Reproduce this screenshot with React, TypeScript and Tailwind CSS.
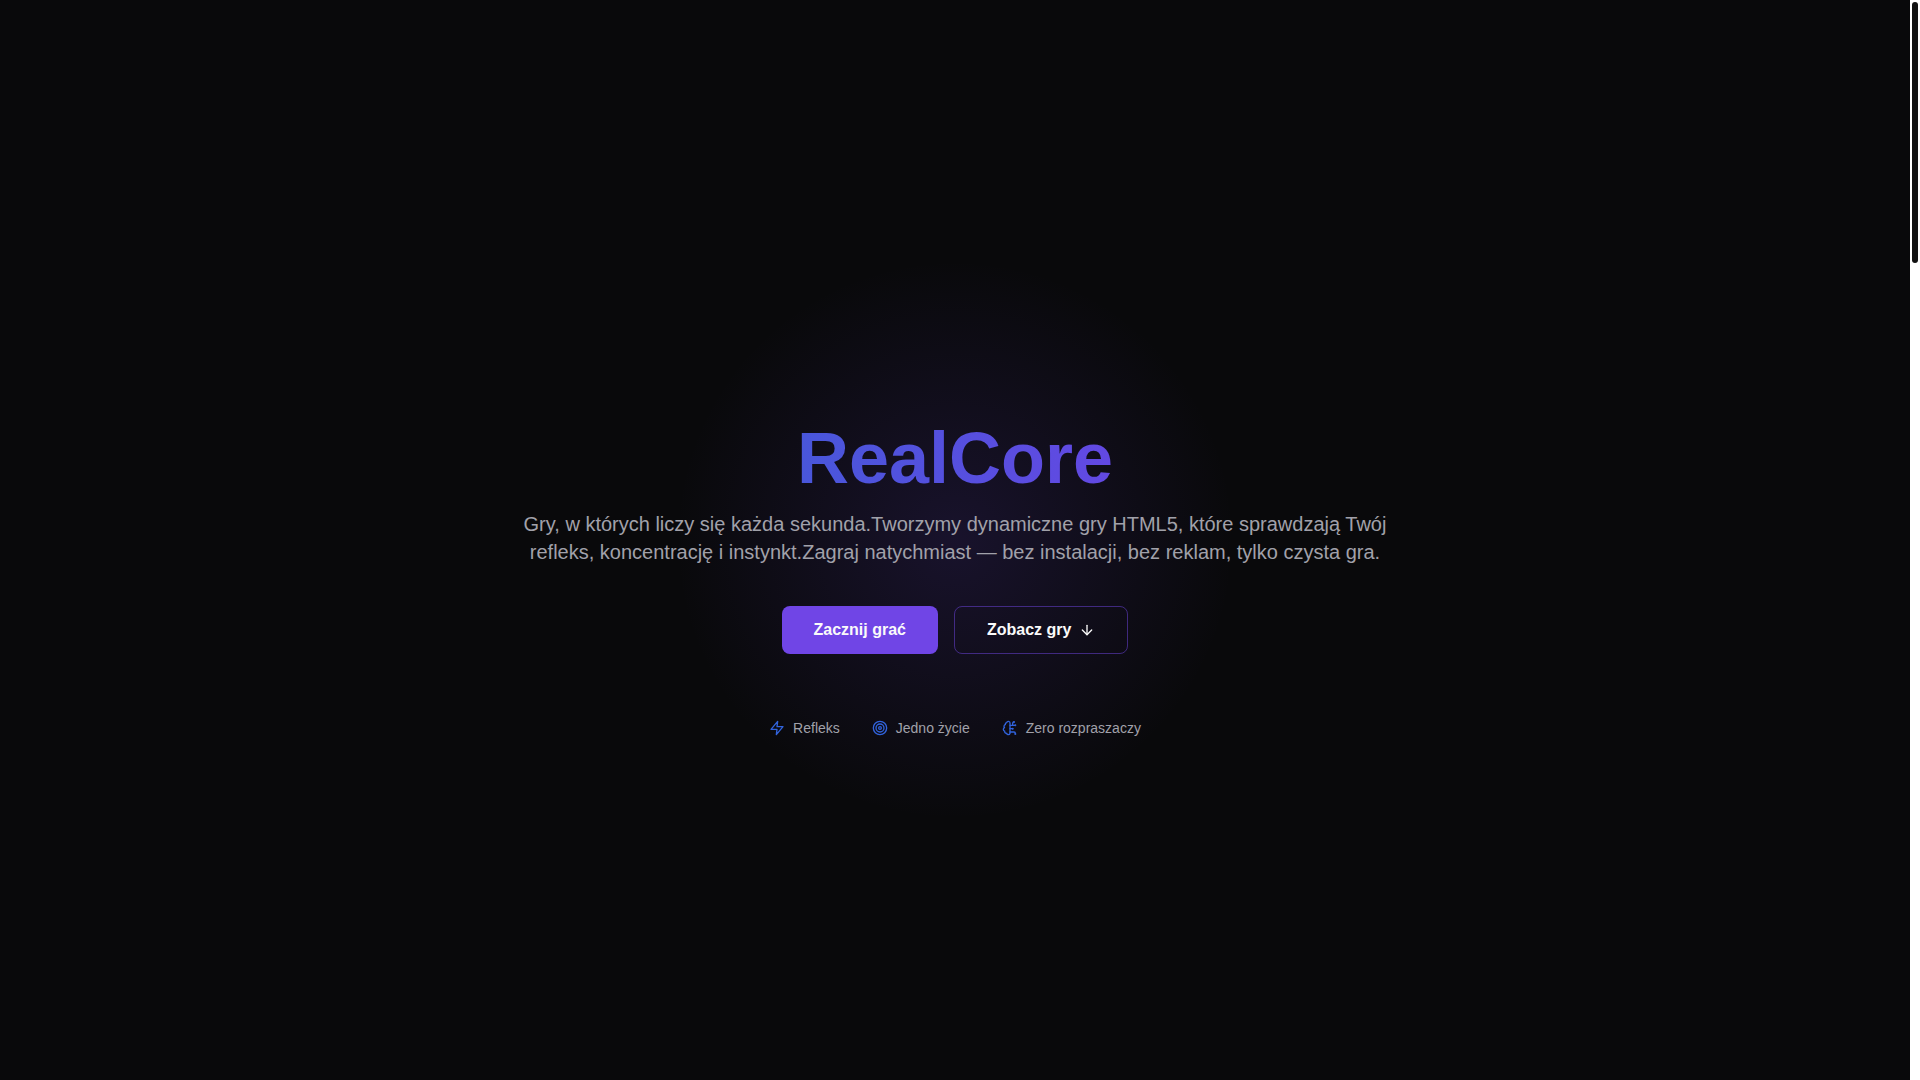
import type { SVGProps } from 'react';
import { ArrowDown, Target } from 'lucide-react';

const strokeProps: SVGProps<SVGSVGElement> = {
  viewBox: '0 0 24 24',
  fill: 'none',
  stroke: 'currentColor',
  strokeWidth: 2,
  strokeLinecap: 'round',
  strokeLinejoin: 'round',
  'aria-hidden': true,
};

function ZapIcon({ className }: { className?: string }) {
  return (
    <svg {...strokeProps} className={className}>
      <polygon points="13 2 3 14 12 14 11 22 21 10 12 10 13 2" />
    </svg>
  );
}

function BrainIcon({ className }: { className?: string }) {
  return (
    <svg {...strokeProps} className={className}>
      <path d="M12 4.5a2.5 2.5 0 0 0-4.96-.46 2.5 2.5 0 0 0-1.98 3 2.5 2.5 0 0 0-1.32 4.24 3 3 0 0 0 .34 5.58 2.5 2.5 0 0 0 2.96 3.08 2.5 2.5 0 0 0 4.91.05L12 20V4.5Z" />
      <path d="M16 8V5c0-1.1.9-2 2-2" />
      <path d="M12 13h4" />
      <path d="M12 18h6a2 2 0 0 1 2 2v1" />
      <path d="M12 8h8" />
      <circle cx="20" cy="8" r=".5" />
      <circle cx="16" cy="13" r=".5" />
      <circle cx="20" cy="21" r=".5" />
      <circle cx="18" cy="3" r=".5" />
    </svg>
  );
}

const features = [
  { icon: ZapIcon, label: 'Refleks' },
  { icon: Target, label: 'Jedno życie' },
  { icon: BrainIcon, label: 'Zero rozpraszaczy' },
];

function Hero() {
  return (
    <section className="relative flex flex-1 flex-col items-center justify-center overflow-hidden px-4 pt-20">
      {/* Background glow */}
      <div className="pointer-events-none absolute inset-0 bg-[radial-gradient(circle_at_center,rgba(112,72,232,0.15)_0,transparent_280px)]" />

      <div className="relative w-full max-w-4xl text-center">
        <h1 className="mb-4 bg-linear-to-r/srgb from-[#3163d3] to-[#7a3cea] bg-clip-text text-7xl leading-[72px] font-bold text-transparent">
          RealCore
        </h1>
        <p className="mb-10 text-xl text-[#a1a1aa]">
          Gry, w których liczy się każda sekunda.Tworzymy dynamiczne gry HTML5, które sprawdzają Twój
          refleks, koncentrację i instynkt.Zagraj natychmiast — bez instalacji, bez reklam, tylko
          czysta gra.
        </p>

        <div className="flex flex-wrap justify-center gap-4">
          <button
            type="button"
            className="flex h-12 items-center rounded-lg bg-[#7045e6] px-8 font-semibold text-[#fafafa] hover:bg-[#7c55ea]"
          >
            Zacznij grać
          </button>
          <button
            type="button"
            className="flex h-12 items-center gap-2 rounded-lg border border-[#7045e6]/50 px-8 font-semibold text-[#fafafa] hover:bg-[#7045e6]/10"
          >
            Zobacz gry
            <ArrowDown className="size-4" />
          </button>
        </div>

        <ul className="mt-16 flex flex-wrap justify-center gap-8 text-sm text-[#a1a1aa]">
          {features.map(({ icon: Icon, label }) => (
            <li key={label} className="flex items-center gap-2">
              <Icon className="size-4 text-[#3163dc]" />
              {label}
            </li>
          ))}
        </ul>
      </div>
    </section>
  );
}

export default function App() {
  return (
    <div className="flex min-h-screen bg-[#09090b] font-[Arial,'Liberation_Sans',sans-serif] [text-rendering:optimizeLegibility]">
      <Hero />
      {/* Scroll track */}
      <div className="w-[10px] shrink-0 bg-white p-[2px]">
        <div className="h-[261px] rounded-full bg-[#111111]" />
      </div>
    </div>
  );
}
